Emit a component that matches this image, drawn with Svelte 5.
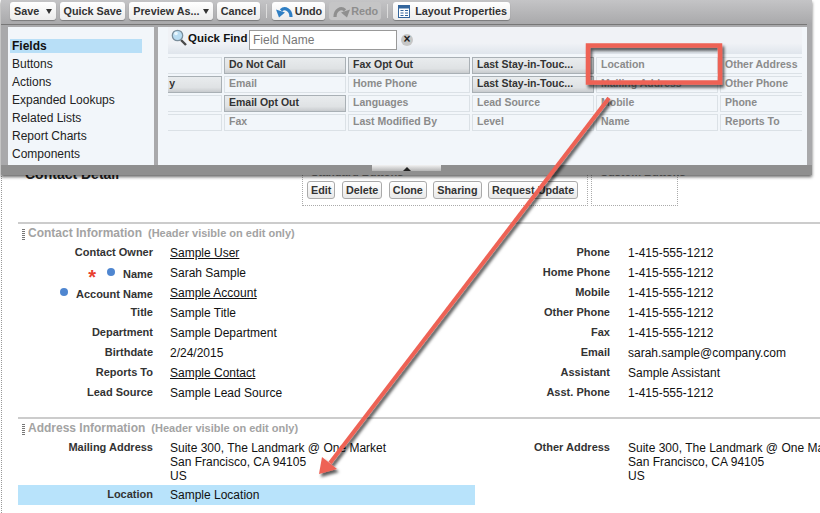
<script lang="ts">
  const sideItems = ['Fields', 'Buttons', 'Actions', 'Expanded Lookups', 'Related Lists', 'Report Charts', 'Components'];

  // palette columns, clipped on both sides by the scroller
  const fieldCols = [
    [{ t: '' }, { t: 'y', used: true, end: true }, { t: '' }, { t: '' }],
    [{ t: 'Do Not Call', used: true }, { t: 'Email' }, { t: 'Email Opt Out', used: true }, { t: 'Fax' }],
    [{ t: 'Fax Opt Out', used: true }, { t: 'Home Phone' }, { t: 'Languages' }, { t: 'Last Modified By' }],
    [{ t: 'Last Stay-in-Touc...', used: true }, { t: 'Last Stay-in-Touc...', used: true }, { t: 'Lead Source' }, { t: 'Level' }],
    [{ t: 'Location' }, { t: 'Mailing Address' }, { t: 'Mobile' }, { t: 'Name' }],
    [{ t: 'Other Address' }, { t: 'Other Phone' }, { t: 'Phone' }, { t: 'Reports To' }]
  ];

  const contactLeft = [
    { label: 'Contact Owner', value: 'Sample User', link: true },
    { label: 'Name', value: 'Sarah Sample', req: true, dot: true },
    { label: 'Account Name', value: 'Sample Account', link: true, dot: true },
    { label: 'Title', value: 'Sample Title' },
    { label: 'Department', value: 'Sample Department' },
    { label: 'Birthdate', value: '2/24/2015' },
    { label: 'Reports To', value: 'Sample Contact', link: true },
    { label: 'Lead Source', value: 'Sample Lead Source' }
  ];

  const contactRight = [
    { label: 'Phone', value: '1-415-555-1212' },
    { label: 'Home Phone', value: '1-415-555-1212' },
    { label: 'Mobile', value: '1-415-555-1212' },
    { label: 'Other Phone', value: '1-415-555-1212' },
    { label: 'Fax', value: '1-415-555-1212' },
    { label: 'Email', value: 'sarah.sample@company.com' },
    { label: 'Assistant', value: 'Sample Assistant' },
    { label: 'Asst. Phone', value: '1-415-555-1212' }
  ];

  const address = ['Suite 300, The Landmark @ One Market', 'San Francisco, CA 94105', 'US'];
</script>

{#snippet row(f)}
  <div class="row">
    <div class="label" class:marked={f.dot}>
      {#if f.req}<span class="req">*</span>{/if}
      {#if f.dot}<span class="dot"></span>{/if}
      <span>{f.label}</span>
    </div>
    <div class="value" class:link={f.link} class:raised={f.dot}><span>{f.value}</span></div>
  </div>
{/snippet}

<div class="page">
  <div class="detail-head">
    <h2>Contact Detail</h2>
    <div class="btn-box standard">
      <div class="box-title">Standard Buttons</div>
      <div class="box-btns">
        <button>Edit</button>
        <button>Delete</button>
        <button>Clone</button>
        <button>Sharing</button>
        <button>Request Update</button>
      </div>
    </div>
    <div class="btn-box custom">
      <div class="box-title">Custom Buttons</div>
    </div>
  </div>

  <section class="contact">
    <div class="sec-head">
      <span class="grip"></span>
      <strong>Contact Information</strong>
      <em>(Header visible on edit only)</em>
    </div>
    <div class="cols">
      <div class="col">
        {#each contactLeft as f}{@render row(f)}{/each}
      </div>
      <div class="col col-right">
        {#each contactRight as f}{@render row(f)}{/each}
      </div>
    </div>
  </section>

  <section class="addr">
    <div class="sec-head">
      <span class="grip"></span>
      <strong>Address Information</strong>
      <em>(Header visible on edit only)</em>
    </div>
    <div class="cols">
      <div class="col">
        <div class="row multi">
          <div class="label"><span>Mailing Address</span></div>
          <div class="value">{#each address as l}<div>{l}</div>{/each}</div>
        </div>
      </div>
      <div class="col col-right">
        <div class="row multi">
          <div class="label"><span>Other Address</span></div>
          <div class="value">{#each address as l}<div>{l}</div>{/each}</div>
        </div>
      </div>
    </div>
    <div class="row drop-row">
      <div class="label"><span>Location</span></div>
      <div class="value"><span>Sample Location</span></div>
    </div>
  </section>
</div>

<div class="panel">
  <div class="toolbar">
    <div class="tb save">
      <span>Save</span><i class="split"></i><i class="caret"></i>
    </div>
    <div class="tb">Quick Save</div>
    <div class="tb preview"><span>Preview As...</span><i class="caret"></i></div>
    <div class="tb">Cancel</div>
    <i class="sep"></i>
    <div class="tb icon">
      <svg width="17" height="13" viewBox="0 0 17 13">
        <path d="M15 12 C15 5 9 1.500 5 5.500" fill="none" stroke="#2f7fc4" stroke-width="3.200" />
        <path d="M0 4.500 L9 7.500 L3 12.500 Z" fill="#2f7fc4" />
      </svg>
      <span>Undo</span>
    </div>
    <div class="tb icon off">
      <svg width="17" height="13" viewBox="0 0 17 13">
        <path d="M2 12 C2 5 8 1.500 12 5.500" fill="none" stroke="#8f8f8f" stroke-width="3.200" />
        <path d="M17 4.500 L8 7.500 L14 12.500 Z" fill="#8f8f8f" />
      </svg>
      <span>Redo</span>
    </div>
    <i class="sep"></i>
    <div class="tb icon layout">
      <svg width="12" height="13" viewBox="0 0 12 13"><rect x=".5" y=".5" width="11" height="12" fill="#fff" stroke="#33659c" /><rect x="1" y="1" width="10" height="2.500" fill="#33659c" /><path d="M2.500 5.500h3M7 5.500h3M2.500 8h3M7 8h3M2.500 10.500h3M7 10.500h3" stroke="#33659c" /></svg>
      <span>Layout Properties</span>
    </div>
  </div>

  <div class="panes">
    <nav class="side">
      {#each sideItems as item, i}
        <div class="side-item" class:active={i === 0}>{item}</div>
      {/each}
    </nav>

    <div class="palette">
      <div class="find">
        <svg class="lens" width="16" height="17" viewBox="0 0 16 17">
          <path d="M10 11 L15 16" stroke="#4a4a4a" stroke-width="2.400" />
          <circle cx="6.500" cy="6.500" r="5.200" fill="#b9dcf2" stroke="#7b8e9c" stroke-width="1.300" />
          <circle cx="5" cy="4.500" r="1.800" fill="#eaf6fd" />
        </svg>
        <b>Quick Find</b>
        <input type="text" placeholder="Field Name" />
        <span class="clear">×</span>
      </div>
      <div class="scroller">
        <div class="grid">
          {#each fieldCols as col}
            <div class="grid-col">
              {#each col as c}
                <div class="cell" class:used={c.used} class:end={c.end}>{c.t}</div>
              {/each}
            </div>
          {/each}
        </div>
      </div>
    </div>
  </div>

  <div class="foot"><div class="handle"><i></i></div></div>
</div>

<!-- callout drawn on top of the screenshot -->
<svg class="callout" width="820" height="513" viewBox="0 0 820 513">
  <defs>
    <filter id="sh" x="-10%" y="-10%" width="120%" height="120%">
      <feDropShadow dx="2" dy="3" stdDeviation="1.500" flood-color="#000" flood-opacity=".65" />
    </filter>
  </defs>
  <g filter="url(#sh)">
    <rect x="588" y="45.500" width="132" height="37" fill="none" stroke="#ee6255" stroke-width="4.500" />
    <path d="M609 98 L330 463" stroke="#ee6255" stroke-width="4" fill="none" />
    <path d="M319 474 L322 457 L337 469 Z" fill="#ee6255" />
  </g>
</svg>

<style>
  :global(body) {
    margin: 0;
    background: #fff;
    font-family: 'Liberation Sans', Arial, sans-serif;
    font-size: 12px;
    color: #111;
    overflow: hidden;
  }

  .page {
    height: 513px;
    box-sizing: border-box;
    margin-left: 1px;
    padding: 160px 0 0 16px;
    border-left: 1px dotted #999;
    overflow: hidden;
  }

  .detail-head {
    display: flex;
    height: 46px;
  }

  h2 {
    margin: 6px 0 0 7px;
    width: 277px;
    font-size: 14px;
    line-height: 16px;
    color: #222;
  }

  .btn-box {
    border: 1px dotted #aaa;
    border-top: 0;
    box-sizing: border-box;
    height: 46px;
    padding: 6px 0 0 4px;
    flex: none;
  }

  .standard {
    width: 286px;
  }

  .custom {
    width: 87px;
    margin-left: 3px;
  }

  .box-title {
    font-size: 11px;
    font-weight: bold;
    line-height: 12px;
    color: #888;
    margin-left: 4px;
    white-space: nowrap;
  }

  .box-btns {
    display: flex;
    gap: 6.500px;
    margin-top: 3px;
  }

  button {
    height: 18px;
    padding: 0 3px;
    border: 1px solid #aaa;
    border-radius: 3px;
    background: linear-gradient(#fff, #e9e9e9);
    font: bold 10.800px/14px 'Liberation Sans', Arial, sans-serif;
    color: #333;
    white-space: nowrap;
  }

  .contact {
    margin-top: 16px;
    border-top: 2px solid #ccc;
  }

  .addr {
    margin-top: 14px;
    border-top: 2px solid #ccc;
  }

  .addr .cols {
    margin-top: 3px;
  }

  .sec-head {
    display: flex;
    align-items: baseline;
    height: 17px;
    padding: 2px 0 0 4px;
    box-sizing: content-box;
    color: #a3a3a3;
    font-weight: bold;
  }

  .sec-head strong {
    margin-left: 3px;
    font-size: 12px;
  }

  .sec-head em {
    margin-left: 6px;
    font-size: 11px;
    font-style: normal;
  }

  .grip {
    width: 3px;
    height: 11px;
    align-self: center;
    background: repeating-linear-gradient(#777 0 1px, transparent 1px 2px);
  }

  .cols {
    display: flex;
  }

  .col {
    width: 457px;
    flex: none;
  }

  .row {
    display: flex;
    height: 20px;
    align-items: center;
  }

  .label {
    width: 135px;
    flex: none;
    display: flex;
    justify-content: flex-end;
    align-items: center;
    margin-bottom: 2px;
    font-size: 11px;
    font-weight: bold;
    color: #333;
  }

  .marked {
    margin: 2px 0 0;
  }

  .value {
    margin-left: 17px;
    font-size: 12px;
    white-space: nowrap;
  }

  .raised {
    margin-top: -1px;
  }

  .link span {
    text-decoration: underline;
  }

  .req {
    color: #e8402f;
    font-size: 20px;
    line-height: 12px;
    height: 12px;
    margin: 6px 11px 0 0;
  }

  .dot {
    width: 8px;
    height: 8px;
    border-radius: 50%;
    background: #4f86d0;
    margin: -5px 8px 0 0;
  }

  .col-right .value {
    margin-left: 18px;
  }

  .multi {
    height: 44px;
    align-items: flex-start;
  }

  .multi .value {
    line-height: 14px;
  }

  .drop-row {
    width: 457px;
    background: #b8e3fb;
  }

  .panel {
    position: absolute;
    left: 1px;
    top: 0;
    width: 811px;
    height: 175px;
    background: linear-gradient(#c4c4c6, #a9a9ab 24px);
    box-shadow: 0 2px 3px rgba(0, 0, 0, .6);
    display: flex;
    flex-direction: column;
  }

  .toolbar {
    display: flex;
    align-items: center;
    height: 25px;
    padding: 0 0 2px 9px;
    box-sizing: border-box;
    gap: 4px;
    border-bottom: 1px solid #777;
    margin-right: 5px;
  }

  .tb {
    height: 18px;
    box-sizing: border-box;
    display: flex;
    align-items: center;
    padding: 0 3.500px;
    background: linear-gradient(#fff, #ececec);
    border-radius: 3px;
    font-weight: bold;
    font-size: 10.800px;
    color: #333;
    box-shadow: 0 1px 1px rgba(0, 0, 0, .3);
    white-space: nowrap;
  }

  .save {
    width: 46px;
    padding: 0 4px;
  }

  .preview {
    width: 84px;
    justify-content: space-between;
    padding: 0 4px;
  }

  .split {
    width: 1px;
    height: 14px;
    background: #bbb;
    margin: 0 5px 0 2px;
  }

  .caret {
    width: 0;
    height: 0;
    border: 3.500px solid transparent;
    border-top: 5px solid #333;
    border-bottom: 0;
  }

  .sep {
    width: 1px;
    height: 14px;
    background: #ddd;
    margin: 0 1px 0 2px;
  }

  .icon {
    gap: 2px;
    padding: 0 3px 0 4px;
  }

  .off {
    background: #c5c5c6;
    color: #8d8d8d;
    box-shadow: none;
    gap: 1px;
  }

  .layout {
    gap: 5px;
    padding-left: 5px;
  }

  .panes {
    flex: 1;
    display: flex;
    min-height: 0;
    margin: 2px 5px 0 7px;
    gap: 4px;
  }

  .side {
    width: 146px;
    flex: none;
    box-sizing: border-box;
    background: #f2f6fa;
    padding: 12px 0 0 2px;
  }

  .side-item {
    height: 18px;
    line-height: 18px;
    padding-left: 2px;
    color: #222;
  }

  .active {
    width: 130px;
    height: 14px;
    line-height: 14px;
    margin-bottom: 2px;
    background: #b8dff7;
    font-weight: bold;
    color: #111;
  }

  .palette {
    flex: 1;
    min-width: 0;
    background: #f2f6fa;
    display: flex;
    flex-direction: column;
  }

  .find {
    margin-left: 10px;
    margin-right: 5px;
    height: 27px;
    flex: none;
    display: flex;
    align-items: center;
    background: linear-gradient(#f0f2f6 60%, #dfe5ec);
    padding: 0 0 2px 3px;
    box-sizing: border-box;
  }

  .lens {
    flex: none;
    margin-bottom: 4px;
  }

  .find b {
    margin: 0 0 3px 1px;
    font-size: 11.500px;
    width: 60px;
    white-space: nowrap;
  }

  .find input {
    width: 148px;
    height: 20px;
    box-sizing: border-box;
    margin: 0 0 0 1px;
    padding: 0 3px;
    border: 1px solid #999;
    background: #fff;
    font: 12px 'Liberation Sans', Arial, sans-serif;
  }

  .find input::placeholder {
    color: #777;
  }

  .clear {
    width: 12px;
    height: 12px;
    margin: 0 0 0 4px;
    border-radius: 50%;
    background: #c6c6c6;
    color: #222;
    font-size: 12px;
    font-weight: bold;
    line-height: 11px;
    text-align: center;
  }

  .scroller {
    margin: 3px 5px 0 10px;
    overflow: hidden;
  }

  .grid {
    display: flex;
    gap: 2px;
    margin-left: -68px;
  }

  .grid-col {
    width: 122px;
    flex: none;
    display: flex;
    flex-direction: column;
    gap: 2px;
  }

  .cell {
    height: 15px;
    box-sizing: content-box;
    border: 1px solid #dbe1e6;
    padding-left: 4px;
    font-size: 10.500px;
    font-weight: bold;
    line-height: 13px;
    color: #8b8b8b;
    white-space: nowrap;
  }

  .used {
    color: #333;
    border-color: #a9b0b5;
    background: linear-gradient(#e9ecee, #dfe2e4 70%, #c8cbce);
  }

  .end {
    text-align: right;
    padding-right: 46px;
    margin-left: -50px;
  }

  .foot {
    height: 10px;
    flex: none;
    background: #8f8f8f;
    display: flex;
    justify-content: center;
  }

  .handle {
    width: 69px;
    height: 6px;
    background: linear-gradient(#f2f2f2, #b5b5b5);
    display: flex;
    justify-content: center;
    align-items: flex-end;
  }

  .handle i {
    width: 0;
    height: 0;
    border: 4px solid transparent;
    border-bottom: 4px solid #222;
    border-top: 0;
  }

  .callout {
    position: absolute;
    left: 0;
    top: 0;
    pointer-events: none;
  }
</style>
